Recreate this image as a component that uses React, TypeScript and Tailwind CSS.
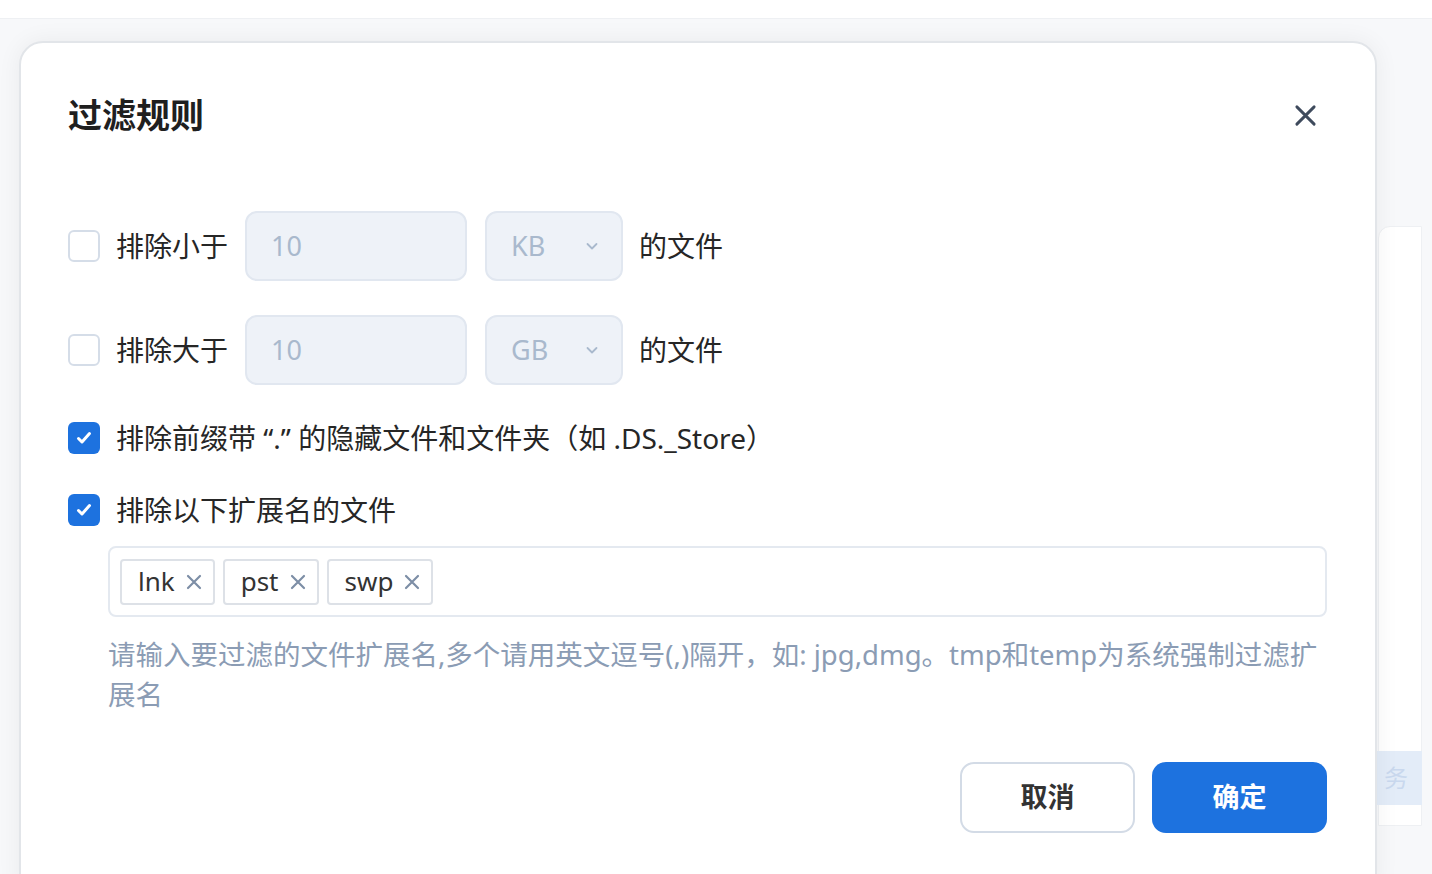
import React from "react";

const font = {
  fontFamily: '"Noto Sans", "Noto Sans CJK SC", sans-serif',
};

function Checkbox({ checked }: { checked?: boolean }) {
  if (checked) {
    return (
      <span className="flex h-8 w-8 shrink-0 items-center justify-center rounded-[6px] bg-[#1d72df]">
        <svg width="20" height="20" viewBox="0 0 20 20" fill="none">
          <path d="M4.5 10.5l3.5 3.5 7.5-8.5" stroke="#fff" strokeWidth="3" strokeLinecap="round" strokeLinejoin="round" />
        </svg>
      </span>
    );
  }
  return <span className="h-8 w-8 shrink-0 rounded-[6px] border-2 border-[#d5dde8] bg-white" />;
}

function SizeRow({ label, unit }: { label: string; unit: string }) {
  return (
    <div className="flex h-[70px] items-center">
      <Checkbox />
      <span className="ml-4 text-[28px] text-[#262626]">{label}</span>
      <div className="ml-[17px] flex h-[70px] w-[222px] items-center rounded-[12px] border-2 border-[#e1e7f0] bg-[#eef2f8] pl-6 text-[27px] text-[#a9b9cd]">
        10
      </div>
      <div className="ml-[18px] flex h-[70px] w-[138px] items-center justify-between rounded-[12px] border-2 border-[#e1e7f0] bg-[#eef2f8] pl-6 pr-[22px] text-[27px] text-[#a9b9cd]">
        <span>{unit}</span>
        <svg width="14" height="10" viewBox="0 0 14 10" fill="none">
          <path d="M2.5 3l4.5 4.5 4.5-4.5" stroke="#a9b9cd" strokeWidth="1.8" strokeLinecap="round" strokeLinejoin="round" />
        </svg>
      </div>
      <span className="ml-4 text-[28px] text-[#262626]">的文件</span>
    </div>
  );
}

function Tag({ text }: { text: string }) {
  return (
    <span className="flex h-[46px] items-center gap-[10px] rounded-[4px] border-2 border-[#dde1e7] bg-white pl-4 pr-[10px] text-[26px] text-[#333]">
      {text}
      <svg width="18" height="18" viewBox="0 0 18 18" fill="none">
        <path d="M3 3l12 12M15 3L3 15" stroke="#7d8ea6" strokeWidth="2.2" strokeLinecap="round" />
      </svg>
    </span>
  );
}

export default function App() {
  return (
    <div style={font} className="relative h-[874px] w-[1432px] overflow-hidden bg-[#f7f8fa]">
      {/* background page behind the dialog */}
      <div className="absolute left-0 top-0 h-[19px] w-full border-b border-[#eef0f3] bg-white" />
      <div className="absolute left-[1378px] top-[226px] h-[600px] w-[44px] rounded-tl-[12px] border border-[#eef0f3] bg-white" />
      <div className="absolute left-[1370px] top-[751px] flex h-[54px] w-[52px] items-center justify-center bg-[#e3ecf8] text-[24px] text-[#c9d8ee]">
        务
      </div>

      <div className="absolute left-[19px] top-[41px] h-[860px] w-[1358px] rounded-[24px] border-2 border-[#e2e5e9] bg-white shadow-[0_0_24px_rgba(0,0,0,0.06)]">
        <div className="mt-[55px] flex h-[34px] items-center justify-between pl-[47px] pr-[58px]">
          <h2 className="text-[34px] font-bold leading-none text-[#1f1f1f]">过滤规则</h2>
          <svg width="23" height="23" viewBox="0 0 24 24" fill="none">
            <path d="M3 3l18 18M21 3L3 21" stroke="#3e4a5c" strokeWidth="3" strokeLinecap="round" />
          </svg>
        </div>

        <div className="flex flex-col pl-[47px] pr-[48px] pt-[79px]">
          <SizeRow label="排除小于" unit="KB" />
          <div className="h-[34px]" />
          <SizeRow label="排除大于" unit="GB" />

          <div className="mt-[33px] flex h-10 items-center">
            <Checkbox checked />
            <span className="ml-4 text-[28px] leading-none text-[#262626]">排除前缀带 “.” 的隐藏文件和文件夹（如 .DS._Store）</span>
          </div>

          <div className="mt-[32px] flex h-10 items-center">
            <Checkbox checked />
            <span className="ml-4 text-[28px] leading-none text-[#262626]">排除以下扩展名的文件</span>
          </div>

          <div className="ml-10 mt-[16px] flex h-[71px] items-center gap-2 rounded-[8px] border-2 border-[#e4e9f0] px-[10px]">
            <Tag text="lnk" />
            <Tag text="pst" />
            <Tag text="swp" />
          </div>

          <p className="ml-10 mt-[18px] text-[27.5px] leading-[40px] text-[#8b9cb4]">
            请输入要过滤的文件扩展名,多个请用英文逗号(,)隔开，如: jpg,dmg。tmp和temp为系统强制过滤扩展名
          </p>

          <div className="mt-[47px] flex justify-end gap-[17px]">
            <button className="h-[71px] w-[175px] rounded-[14px] border-2 border-[#d3dbe6] bg-white text-[27px] font-bold text-[#333]">
              取消
            </button>
            <button className="h-[71px] w-[175px] rounded-[14px] bg-[#1d72df] text-[27px] font-bold text-white">
              确定
            </button>
          </div>
        </div>
      </div>
    </div>
  );
}
